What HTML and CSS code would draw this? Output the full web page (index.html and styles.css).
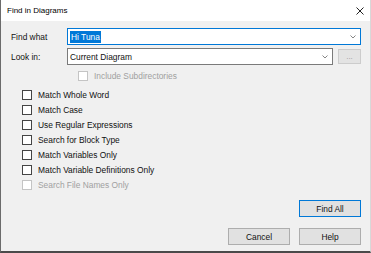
FILE: index.html
```html
<html>
    <head>
        <title>Find in Diagrams</title>
        <link rel="stylesheet" href="styles.css">
    </head>
    <body>
        <div class="dialog">
            <div class="titlebar">
                <span class="title">Find in Diagrams</span>
                <svg class="close" width="8" height="8" viewBox="0 0 8 8">
                    <path d="M0.5 0.5 L7.5 7.5 M7.5 0.5 L0.5 7.5" stroke="#222" stroke-width="1"/>
                </svg>
            </div>
            <div class="content">
                <div class="field-row">
                    <label>Find what</label>
                    <div class="combo focused">
                        <span class="selected">Hi Tuna</span>
                        <svg class="chevron" width="6" height="4" viewBox="0 0 6 4"><path d="M0.5 0.5 L3 3 L5.5 0.5" fill="none" stroke="#777" stroke-width="0.9"/></svg>
                    </div>
                </div>
                <div class="field-row">
                    <label>Look in:</label>
                    <div class="look-in">
                        <div class="combo">
                            <span>Current Diagram</span>
                            <svg class="chevron" width="6" height="4" viewBox="0 0 6 4"><path d="M0.5 0.5 L3 3 L5.5 0.5" fill="none" stroke="#777" stroke-width="0.9"/></svg>
                        </div>
                        <button class="browse" disabled>...</button>
                    </div>
                </div>
                <div class="check sub disabled"><span class="box"></span>Include Subdirectories</div>
                <div class="options">
                    <div class="check"><span class="box"></span>Match Whole Word</div>
                    <div class="check"><span class="box"></span>Match Case</div>
                    <div class="check"><span class="box"></span>Use Regular Expressions</div>
                    <div class="check"><span class="box"></span>Search for Block Type</div>
                    <div class="check"><span class="box"></span>Match Variables Only</div>
                    <div class="check"><span class="box"></span>Match Variable Definitions Only</div>
                    <div class="check disabled"><span class="box"></span>Search File Names Only</div>
                </div>
                <div class="buttons first">
                    <button class="btn default">Find All</button>
                </div>
                <div class="buttons">
                    <button class="btn">Cancel</button>
                    <button class="btn">Help</button>
                </div>
            </div>
        </div>
    </body>
</html>
```

FILE: styles.css
```css
body{
    margin: 0;
    font-family: 'Liberation Sans', Arial, sans-serif;
    font-size: 8.4px;
    color: #111;
}
.dialog{
    width: 371px;
    height: 253px;
    box-sizing: border-box;
    background-color: #f0f0f0;
    border-left: 1px solid #6b6b6b;
    border-right: 1px solid #d8d8d8;
    border-bottom: 2px solid #4a4a4a;
}
.titlebar{
    height: 21px;
    background-color: #ffffff;
    display: flex;
    align-items: center;
    justify-content: space-between;
    padding: 0 6px 0 6px;
}
.title{
    font-size: 8px;
    color: #000;
}
.content{
    padding: 7px 9px 0 9px;
    display: flex;
    flex-direction: column;
}
.field-row{
    display: grid;
    grid-template-columns: 57px 1fr;
    align-items: center;
    margin-bottom: 3px;
}
label{
    padding-left: 1px;
}
.combo{
    height: 17px;
    box-sizing: border-box;
    background-color: #fff;
    border: 1px solid #7a7a7a;
    display: flex;
    align-items: center;
    justify-content: space-between;
    padding: 0 4px 0 2px;
}
.combo.focused{
    border-color: #0078d7;
}
.selected{
    background-color: #0078d7;
    color: #fff;
    padding: 1px 1px;
}
.look-in{
    display: grid;
    grid-template-columns: 1fr 23px;
    gap: 5px;
    align-items: center;
}
.browse{
    height: 15px;
    font-size: 8px;
    padding: 0;
    border: 1px solid #cccccc;
    background-color: #e3e3e3;
    color: #9a9a9a;
}
.check{
    height: 15px;
    display: flex;
    align-items: center;
}
.box{
    width: 8px;
    height: 8px;
    border: 1px solid #444;
    background-color: #fff;
    margin-right: 6px;
}
.check.sub{
    margin-left: 68px;
}
.check.disabled{
    color: #a0a0a0;
}
.check.disabled .box{
    border-color: #c4c4c4;
}
.options{
    margin-top: 4px;
    padding-left: 12px;
}
.buttons{
    display: flex;
    justify-content: flex-end;
    gap: 9px;
    margin-top: 11px;
}
.buttons.first{
    margin-top: 8px;
}
.btn{
    width: 62px;
    height: 17px;
    padding: 0;
    font-family: 'Liberation Sans', Arial, sans-serif;
    font-size: 8.4px;
    color: #111;
    background-color: #e1e1e1;
    border: 1px solid #adadad;
}
.btn.default{
    border-color: #0078d7;
}
```
